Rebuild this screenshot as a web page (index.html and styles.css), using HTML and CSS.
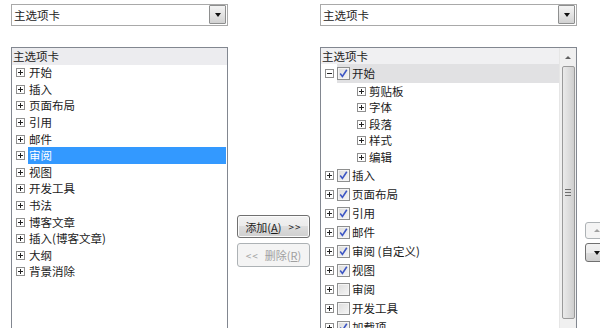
FILE: index.html
```html
<!DOCTYPE html>
<html lang="zh-CN">
<head>
<meta charset="utf-8">
<link rel="stylesheet" href="styles.css">
</head>
<body>
<div class="dialog">
  <div class="col col-left">
    <div class="combo"><span class="combo-txt">主选项卡</span><span class="drop"><i class="tri"></i></span></div>
    <div class="list">
      <div class="hdr">主选项卡</div>
      <div class="row"><span class="exp"></span><span class="lbl">开始</span></div>
      <div class="row"><span class="exp"></span><span class="lbl">插入</span></div>
      <div class="row"><span class="exp"></span><span class="lbl">页面布局</span></div>
      <div class="row"><span class="exp"></span><span class="lbl">引用</span></div>
      <div class="row"><span class="exp"></span><span class="lbl">邮件</span></div>
      <div class="row"><span class="exp"></span><span class="lbl sel">审阅</span></div>
      <div class="row"><span class="exp"></span><span class="lbl">视图</span></div>
      <div class="row"><span class="exp"></span><span class="lbl">开发工具</span></div>
      <div class="row"><span class="exp"></span><span class="lbl">书法</span></div>
      <div class="row"><span class="exp"></span><span class="lbl">博客文章</span></div>
      <div class="row"><span class="exp"></span><span class="lbl">插入(博客文章)</span></div>
      <div class="row"><span class="exp"></span><span class="lbl">大纲</span></div>
      <div class="row"><span class="exp"></span><span class="lbl">背景消除</span></div>
    </div>
  </div>

  <div class="mid">
    <div class="btn">添加(<u>A</u>)<span class="arr">&gt;&gt;</span></div>
    <div class="btn disabled"><span class="arr">&lt;&lt;</span>删除(<u>R</u>)</div>
  </div>

  <div class="col col-right">
    <div class="combo"><span class="combo-txt">主选项卡</span><span class="drop"><i class="tri"></i></span></div>
    <div class="list scroll">
      <div class="items">
        <div class="hdr hdr-r">主选项卡</div>
        <div class="trow"><span class="exp minus"></span><span class="hl"><span class="cb on"></span><span class="tl">开始</span></span></div>
        <div class="srow"><span class="exp"></span><span class="tl">剪贴板</span></div>
        <div class="srow"><span class="exp"></span><span class="tl">字体</span></div>
        <div class="srow"><span class="exp"></span><span class="tl">段落</span></div>
        <div class="srow"><span class="exp"></span><span class="tl">样式</span></div>
        <div class="srow"><span class="exp"></span><span class="tl">编辑</span></div>
        <div class="trow"><span class="exp"></span><span class="nohl"><span class="cb on"></span><span class="tl">插入</span></span></div>
        <div class="trow"><span class="exp"></span><span class="nohl"><span class="cb on"></span><span class="tl">页面布局</span></span></div>
        <div class="trow"><span class="exp"></span><span class="nohl"><span class="cb on"></span><span class="tl">引用</span></span></div>
        <div class="trow"><span class="exp"></span><span class="nohl"><span class="cb on"></span><span class="tl">邮件</span></span></div>
        <div class="trow"><span class="exp"></span><span class="nohl"><span class="cb on"></span><span class="tl">审阅 (自定义)</span></span></div>
        <div class="trow"><span class="exp"></span><span class="nohl"><span class="cb on"></span><span class="tl">视图</span></span></div>
        <div class="trow"><span class="exp"></span><span class="nohl"><span class="cb"></span><span class="tl">审阅</span></span></div>
        <div class="trow"><span class="exp"></span><span class="nohl"><span class="cb"></span><span class="tl">开发工具</span></span></div>
        <div class="trow"><span class="exp"></span><span class="nohl"><span class="cb on"></span><span class="tl">加载项</span></span></div>
      </div>
      <div class="sb">
        <div class="sb-up"><i class="sb-tri"></i></div>
        <div class="thumb"><i class="grip"></i></div>
      </div>
    </div>
  </div>

  <div class="updown">
    <div class="ud disabled"><i class="ud-up"></i></div>
    <div class="ud"><i class="ud-down"></i></div>
  </div>
</div>
</body>
</html>
```

FILE: styles.css
```css
* { box-sizing: border-box; }
html, body { margin: 0; background: #fff; }
body {
  width: 600px;
  height: 328px;
  overflow: hidden;
  font-family: "Noto Sans CJK SC", "Noto Sans", sans-serif;
  font-size: 11.5px;
  color: #1b1b1b;
}
.dialog {
  display: flex;
  align-items: flex-start;
  padding-top: 4px;
  height: 328px;
}
.col-left { margin-left: 11px; width: 217px; flex: none; }
.col-right { width: 257px; flex: none; }

.combo {
  height: 22px;
  border: 1px solid #a9a9a9;
  display: flex;
  align-items: center;
  padding-left: 2px;
  background: #fff;
}
.combo-txt { flex: 1; line-height: 20px; }
.drop {
  width: 17px;
  height: 19px;
  margin-right: 1px;
  margin-top: -1px;
  border: 1px solid #8e8f8f;
  border-radius: 1px;
  background: linear-gradient(#f4f4f4, #e4e4e4 50%, #d2d2d2);
  display: flex;
  align-items: center;
  justify-content: center;
}
.tri {
  width: 0; height: 0;
  border-left: 3px solid transparent;
  border-right: 3px solid transparent;
  border-top: 4px solid #111;
  margin-top: 1px;
}

.list {
  margin-top: 21px;
  height: 300px;
  border: 1px solid #828790;
  background: #fff;
}
.hdr {
  height: 16.5px;
  line-height: 16px;
  padding-left: 1px;
  background: #ececef;
}
.row {
  height: 16.6px;
  display: flex;
  align-items: center;
  padding-left: 4px;
}
.exp {
  flex: none;
  width: 9px;
  height: 9px;
  border: 1px solid #8f8f8f;
  background:
    linear-gradient(#222, #222) center / 5px 1px no-repeat,
    linear-gradient(#222, #222) center / 1px 5px no-repeat,
    #fff;
}
.exp.minus {
  background:
    linear-gradient(#222, #222) center / 5px 1px no-repeat,
    #fff;
}
.lbl {
  margin-left: 3px;
  padding-left: 1px;
  line-height: 17px;
  flex: 1;
  margin-right: 1px;
}
.lbl.sel { background: #3399ff; color: #fff; }

/* right tree */
.list.scroll { display: flex; }
.items { flex: 1; min-width: 0; }
.hdr-r { padding-left: 1px; background: #f0f0f2; height: 16px; }
.trow {
  height: 19px;
  display: flex;
  align-items: center;
  padding-left: 4px;
}
.trow:first-of-type { height: 19px; }
.hl, .nohl {
  margin-left: 3px;
  flex: 1;
  height: 19px;
  display: flex;
  align-items: center;
}
.hl { background: #e1e1e3; }
.cb {
  flex: none;
  width: 13px;
  height: 13px;
  border: 1px solid #8e8f8f;
  background: linear-gradient(135deg, #dcdcdc, #f6f6f6);
  box-shadow: inset 0 0 0 1px #f4f4f4;
}
.cb.on {
  background:
    url("data:image/svg+xml,%3Csvg xmlns='http://www.w3.org/2000/svg' width='11' height='11'%3E%3Cpath d='M2.2 5.6 L4.4 8.4 L8.8 1.8' fill='none' stroke='%233d56c4' stroke-width='1.6'/%3E%3C/svg%3E") center / 11px 11px no-repeat,
    linear-gradient(135deg, #dcdcdc, #f6f6f6);
}
.tl { margin-left: 2px; line-height: 17px; white-space: nowrap; }
.srow {
  height: 16.5px;
  display: flex;
  align-items: center;
  padding-left: 36px;
}
.srow .tl { margin-left: 3px; }

.sb {
  width: 17px;
  flex: none;
  background: #f0f0f0;
  border-left: 1px solid #e6e6e6;
  display: flex;
  flex-direction: column;
  align-items: center;
}
.sb-up {
  height: 18px;
  width: 100%;
  display: flex;
  align-items: center;
  justify-content: center;
}
.sb-tri {
  width: 0; height: 0;
  border-left: 3px solid transparent;
  border-right: 3px solid transparent;
  border-bottom: 3px solid #606060;
}
.thumb {
  width: 13px;
  height: 253px;
  border: 1px solid #9a9a9a;
  border-radius: 2px;
  background: linear-gradient(90deg, #eaeaea, #dcdcdc 55%, #cfcfcf);
  display: flex;
  align-items: center;
  justify-content: center;
}
.grip {
  width: 6px;
  height: 7px;
  background: repeating-linear-gradient(#6e6e6e 0 1px, transparent 1px 3px);
}

/* middle buttons */
.mid {
  width: 92px;
  flex: none;
  padding-left: 9px;
  padding-top: 211px;
  display: flex;
  flex-direction: column;
  gap: 5px;
}
.btn {
  width: 73px;
  height: 23px;
  border: 1px solid #707070;
  border-radius: 3px;
  background: linear-gradient(#f2f2f2, #ebebeb 50%, #dddddd 50%, #cfcfcf);
  box-shadow: inset 0 0 0 1px #fbfbfb;
  display: flex;
  align-items: center;
  justify-content: center;
  font-size: 11px;
  white-space: nowrap;
  color: #1b1b1b;
}
.btn .arr { margin-left: 7px; letter-spacing: 1px; font-size: 10px; }
.btn.disabled {
  height: 24px;
  border-color: #adb2b5;
  background: #f4f4f4;
  box-shadow: none;
  color: #a0a0a0;
}
.btn.disabled .arr { margin-left: 0; margin-right: 6px; }

/* far right up/down */
.updown {
  margin-left: 8px;
  padding-top: 218px;
  display: flex;
  flex-direction: column;
  gap: 4px;
  flex: none;
}
.ud {
  width: 24px;
  height: 17px;
  border: 1px solid #707070;
  border-radius: 3px;
  background: linear-gradient(#f2f2f2, #ebebeb 50%, #dddddd 50%, #cfcfcf);
  display: flex;
  align-items: center;
  padding-left: 8px;
}
.ud + .ud { height: 19px; }
.ud.disabled { border-color: #adb2b5; background: #f4f4f4; }
.ud-up {
  width: 0; height: 0;
  border-left: 3px solid transparent;
  border-right: 3px solid transparent;
  border-bottom: 3px solid #a0a0a0;
}
.ud-down {
  width: 0; height: 0;
  border-left: 3.5px solid transparent;
  border-right: 3.5px solid transparent;
  border-top: 4px solid #111;
}
```
